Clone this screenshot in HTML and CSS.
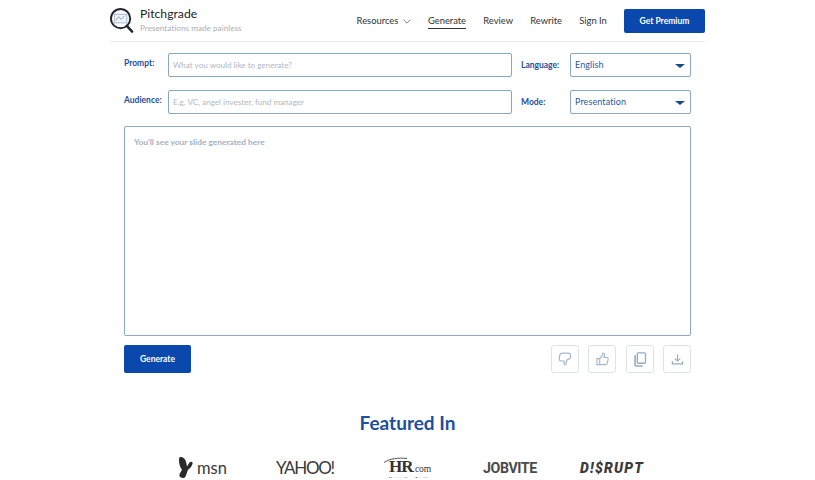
FILE: index.html
```html
<!DOCTYPE html>
<html lang="en">
<head>
  <meta charset="UTF-8"/>
  <meta name="viewport" content="width=device-width, initial-scale=1.0"/>
  <title>Generate | Pitchgrade</title>
  <link rel="stylesheet" href="styles.css">
</head>
<body>

  <header class="topbar">
    <a class="brand" href="#">
      <svg class="brand-icon" width="25" height="27" viewBox="0 0 26 28">
        <circle cx="11" cy="12" r="10" fill="#fff" stroke="#22262c" stroke-width="2"/>
        <rect x="4.5" y="7.5" width="13" height="9" fill="#eef3f8" stroke="#a3b6cb" stroke-width="1"/>
        <path d="M6 14l3-4 2.500 3 3.500-4" fill="none" stroke="#93a9c3" stroke-width="1"/>
        <path d="M17.500 19.500l5.500 6" fill="none" stroke="#22262c" stroke-width="2.600" stroke-linecap="round"/>
      </svg>
      <span class="brand-text">
        <span class="brand-name">Pitchgrade</span>
        <span class="brand-tag">Presentations made painless</span>
      </span>
    </a>
    <nav class="nav">
      <a class="nav-link" href="#">Resources
        <svg class="caret" width="8" height="5" viewBox="0 0 9 6"><path d="M.5 1l4 4 4-4" fill="none" stroke="#555" stroke-width=".9"/></svg>
      </a>
      <a class="nav-link active" href="#">Generate</a>
      <a class="nav-link" href="#">Review</a>
      <a class="nav-link" href="#">Rewrite</a>
      <a class="nav-link" href="#">Sign In</a>
      <a class="premium-btn" href="#">Get Premium</a>
    </nav>
  </header>

  <main class="main">
    <div class="form-grid">
      <label class="field-label">Prompt:</label>
      <input class="field" type="text" placeholder="What you would like to generate?">
      <label class="field-label">Language:</label>
      <div class="select-box"><span>English</span><i class="select-arrow"></i></div>

      <label class="field-label">Audience:</label>
      <input class="field" type="text" placeholder="E.g. VC, angel invester, fund manager">
      <label class="field-label">Mode:</label>
      <div class="select-box"><span>Presentation</span><i class="select-arrow"></i></div>
    </div>

    <div class="output">You'll see your slide generated here</div>

    <div class="actions">
      <button class="generate-btn">Generate</button>
      <div class="icon-btns">
        <button class="icon-btn" aria-label="Dislike">
          <svg width="14" height="14" viewBox="0 0 14 14"><path d="M4.500 1.200h5.200c1.600 0 3 1.300 3 3 0 1.800-1.200 2.800-2.900 3.100L8.600 8.600l-.4 2.600c-.1.900-.7 1.600-1.300 1.600-.6 0-.8-.8-.8-1.500V9H3.300C2 9 1.200 8 1.300 6.800l.3-3.200C1.800 2.200 3 1.200 4.500 1.200z" fill="none" stroke="#a5b8cc" stroke-width="1.200"/></svg>
        </button>
        <button class="icon-btn" aria-label="Like">
          <svg width="15" height="15" viewBox="0 0 16 16"><path d="M5 7l2.600-3.200c.5-.7.700-1.500.8-2.800.9 0 1.700.8 1.700 2 0 1-.3 2-.7 2.800h3.300c.9 0 1.500.8 1.300 1.700l-.9 4.600c-.2.800-.8 1.400-1.700 1.400H5z M5 7H2v6.500h3" fill="none" stroke="#a5b8cc" stroke-width="1.200"/></svg>
        </button>
        <button class="icon-btn" aria-label="Copy">
          <svg width="14" height="15" viewBox="0 0 15 16"><rect x="4.600" y="1" width="8.800" height="11" rx="1" fill="none" stroke="#95abc4" stroke-width="1.400"/><path d="M2.200 3.500v10.300c0 .6.400 1.100 1 1.100h7.300" fill="none" stroke="#95abc4" stroke-width="1.700"/></svg>
        </button>
        <button class="icon-btn" aria-label="Download">
          <svg width="13" height="13" viewBox="0 0 14 14"><path d="M7 1.500v7M4 5.700L7 8.700l3-3" fill="none" stroke="#95abc4" stroke-width="1.200"/><path d="M1.500 9v2.800h11V9" fill="none" stroke="#95abc4" stroke-width="1.400"/></svg>
        </button>
      </div>
    </div>

    <h2 class="featured-title">Featured In</h2>

    <div class="logos">
      <div class="logo logo-msn">
        <svg width="14" height="21" viewBox="0 0 14 21"><path d="M1.500 0C4.500 0 7 2.500 7.500 7L8 9.500l2.500-4c1-1.300 3.300-.9 3.100 1-.4 2.500-2.800 5-4.800 6.500-.6 2.500-1.600 5-2.600 7-.8 1.200-3.200 1.200-4.700.3C0 19.400.2 18 .9 16.600L3 12.800C1 10 0 7 0 3.500 0 1.500.3 0 1.500 0z" fill="#2a2a2a"/></svg>
        <span>msn</span>
      </div>
      <div class="logo logo-yahoo">YAHOO!</div>
      <div class="logo logo-hr">
        <svg class="hr-swoosh" width="24" height="6" viewBox="0 0 24 6"><path d="M0 5.500C6 1.500 14 .5 23 1.500" fill="none" stroke="#555" stroke-width="1"/></svg>
        <b>HR</b><span>.com</span><small>Maximizing Human Potential</small>
      </div>
      <div class="logo logo-jobvite">JOBVITE</div>
      <div class="logo logo-disrupt">D!$RUPT</div>
    </div>
  </main>

</body>
</html>
```

FILE: styles.css
```css
:root {
  --blue: #0b48ae;
  --field-border: #8aa8c6;
  --label: #1d4f9c;
}

* {
  margin: 0;
  padding: 0;
  box-sizing: border-box;
}

body {
  background: #fff;
  font-family: 'Lato', sans-serif;
  color: #222;
  overflow: hidden;
}

a {
  text-decoration: none;
  color: inherit;
}

.topbar {
  width: 595px;
  height: 42px;
  margin: 0 auto;
  display: flex;
  align-items: flex-start;
  justify-content: space-between;
  border-bottom: 1px solid #e8ebee;
}

.brand {
  display: flex;
  gap: 5px;
  padding-top: 7px;
}

.brand-text {
  display: flex;
  flex-direction: column;
}

.brand-name {
  font-size: 12.200px;
  line-height: 14px;
  color: #222;
}

.brand-tag {
  font-size: 8.200px;
  line-height: 13px;
  margin-top: 1px;
  color: #a9b0b8;
}

.nav {
  display: flex;
  align-items: center;
  height: 24px;
  margin-top: 9px;
}

.nav-link {
  font-size: 9.400px;
  line-height: 13px;
  color: #333;
  margin-right: 17.200px;
  padding-bottom: 1px;
}

.nav-link.active {
  border-bottom: 1px solid #333;
}

.caret {
  margin-left: 2px;
}

.premium-btn {
  width: 81px;
  height: 24px;
  background: var(--blue);
  color: #fff;
  font-size: 8.500px;
  font-weight: 700;
  line-height: 24px;
  text-align: center;
  border-radius: 2px;
}

.main {
  width: 567px;
  margin: 0 auto;
  padding-top: 11px;
}

.form-grid {
  display: grid;
  grid-template-columns: 44px 344px 58px 121px;
  grid-template-rows: 24px 24px;
  row-gap: 13px;
}

.field-label {
  font-size: 8.500px;
  font-weight: 700;
  color: var(--label);
  padding-top: 5px;
}

.form-grid .field-label:nth-of-type(even) {
  padding-left: 9px;
  padding-top: 7px;
}

.field,
.select-box {
  height: 24px;
  border: 1px solid var(--field-border);
  border-radius: 2px;
  background: #fff;
  font-family: 'Lato', sans-serif;
  font-size: 8.100px;
  padding: 0 4px;
  outline: none;
}

.field::placeholder {
  color: #b1b8c0;
  opacity: 1;
}

.select-box {
  display: flex;
  align-items: center;
  justify-content: space-between;
  color: #2c5a9c;
  font-size: 9px;
  line-height: 20px;
  padding: 0 5px 0 4px;
  letter-spacing: .1px;
}

.select-arrow {
  width: 0;
  height: 0;
  margin: 1px 0 0;
  border-left: 5px solid transparent;
  border-right: 5px solid transparent;
  border-top: 4px solid #14498f;
}

.output {
  height: 210px;
  margin-top: 12px;
  padding: 10px 9px;
  border: 1px solid var(--field-border);
  border-radius: 2px;
  font-size: 8.400px;
  font-weight: 700;
  color: #a3b1c3;
}

.actions {
  display: flex;
  justify-content: space-between;
  margin-top: 9px;
}

.generate-btn {
  width: 67px;
  height: 28px;
  background: var(--blue);
  color: #fff;
  border: none;
  border-radius: 2px;
  font-family: 'Lato', sans-serif;
  font-size: 8.500px;
  font-weight: 700;
}

.icon-btns {
  display: flex;
  gap: 9.500px;
}

.icon-btn {
  width: 28px;
  height: 28px;
  display: flex;
  align-items: center;
  justify-content: center;
  background: #fff;
  border: 1px solid #dde3e9;
  border-radius: 3px;
}

.featured-title {
  margin-top: 38px;
  font-size: 19px;
  line-height: 24px;
  font-weight: 700;
  text-align: center;
  color: #1d4f9c;
}

.logos {
  display: flex;
  align-items: center;
  height: 21px;
  margin: 22px 0 0 55px;
  color: #333;
}

.logo {
  flex: none;
}

.logo-msn {
  width: 97px;
  display: flex;
  align-items: center;
  gap: 4px;
  font-size: 16.500px;
  line-height: 18px;
  color: #3a3a3a;
}

.logo-yahoo {
  width: 108px;
  font-size: 17px;
  line-height: 20px;
  letter-spacing: -1.300px;
  color: #3a3a3a;
}

.logo-hr {
  width: 99px;
  position: relative;
  align-self: flex-start;
  margin-top: 2px;
  padding-left: 5px;
  line-height: 16px;
  font-family: 'Liberation Serif', serif;
}

.hr-swoosh {
  position: absolute;
  left: 0;
  top: -2px;
}

.logo-hr b {
  font-size: 17px;
  letter-spacing: -1px;
}

.logo-hr span {
  font-size: 9.500px;
}

.logo-hr small {
  position: absolute;
  left: 5px;
  top: 17.600px;
  white-space: nowrap;
  line-height: 4px;
  font-family: 'Lato', sans-serif;
  font-size: 3px;
  font-weight: 700;
}

.logo-jobvite {
  width: 97px;
  font-family: 'Roboto', sans-serif;
  font-size: 14.200px;
  line-height: 18px;
  font-weight: 700;
  color: #4a4a4a;
  letter-spacing: -.4px;
}

.logo-disrupt {
  font-family: 'Roboto', sans-serif;
  font-size: 14px;
  line-height: 18px;
  font-weight: 900;
  font-style: italic;
  letter-spacing: 1.200px;
  color: #3a3a3a;
}
```
